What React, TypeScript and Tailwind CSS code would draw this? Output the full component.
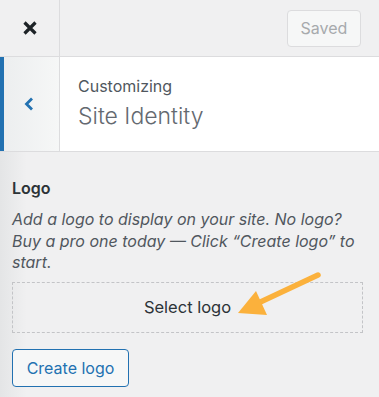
import React from "react";

export default function App() {
  return (
    <div
      className="relative flex h-[397px] w-[379px] flex-col overflow-hidden bg-[#f0f0f1]"
      style={{ fontFamily: "Inter, 'Liberation Sans', sans-serif" }}
    >
      {/* top bar */}
      <div className="flex h-[57px] shrink-0 border-b border-[#dcdcde] bg-[#f0f0f1]">
        <div className="flex w-[60px] items-center justify-center border-r border-[#dcdcde]">
          <svg width="16" height="16" viewBox="0 0 16 16" className="mt-[-1px]">
            <path d="M2.5 2.5 L13.5 13.5 M13.5 2.5 L2.5 13.5" stroke="#1d2327" strokeWidth="3.2" strokeLinecap="butt" />
          </svg>
        </div>
        <div className="flex flex-1 items-center justify-end pr-[18px]">
          <div className="flex h-[37px] w-[74px] items-center justify-center rounded-[4px] border border-[#dcdcde] bg-[#f6f7f7] text-[16px] text-[#a7aaad]">
            Saved
          </div>
        </div>
      </div>

      {/* header */}
      <div className="flex h-[95px] shrink-0 border-b border-[#dcdcde]">
        <div className="flex w-[60px] items-center justify-center border-l-4 border-r border-l-[#2271b1] border-r-[#dcdcde] bg-gradient-to-r from-[#eceeef] to-[#f6f7f7] pr-[6px]">
          <svg width="12" height="16" viewBox="0 0 12 16">
            <path d="M9 2.5 L3.5 8 L9 13.5" fill="none" stroke="#2271b1" strokeWidth="2.8" />
          </svg>
        </div>
        <div className="flex flex-1 flex-col justify-center bg-white pl-[18px] pb-[2px]">
          <div className="text-[16px] leading-[20px] text-[#50575e]">Customizing</div>
          <div className="mt-[5px] text-[23px] font-light leading-[30px] text-[#646970]">Site Identity</div>
        </div>
      </div>

      {/* logo section */}
      <div className="flex-1 bg-gradient-to-r from-[#e4e5e6] via-[#f0f0f1] via-[7%] to-[#f0f0f1] px-[12px] pt-[25px]">
        <div className="text-[16px] font-semibold leading-[22px] text-[#2c3338]">Logo</div>
        <p className="mt-[10px] text-[16px] italic leading-[21.5px] text-[#50575e]">
          Add a logo to display on your site. No logo? Buy a pro one today — Click “Create logo” to start.
        </p>
        <div className="mt-[8px] flex h-[51px] w-[351px] items-center justify-center border border-dashed border-[#c3c4c7] text-[16.5px] text-[#2c3338]">
          Select logo
        </div>
        <div className="mt-[16px] flex h-[38px] w-[117px] items-center justify-center rounded-[4px] border border-[#2271b1] bg-[#f6f7f7] text-[16px] text-[#2271b1]">
          Create logo
        </div>
      </div>

      {/* annotation arrow */}
      <svg className="absolute left-0 top-0" width="379" height="397" viewBox="0 0 379 397">
        <path d="M318 275 L254 305" stroke="#fbb13c" strokeWidth="5.5" strokeLinecap="round" />
        <polygon points="238,313 256,291 267,315" fill="#fbb13c" />
      </svg>
    </div>
  );
}
